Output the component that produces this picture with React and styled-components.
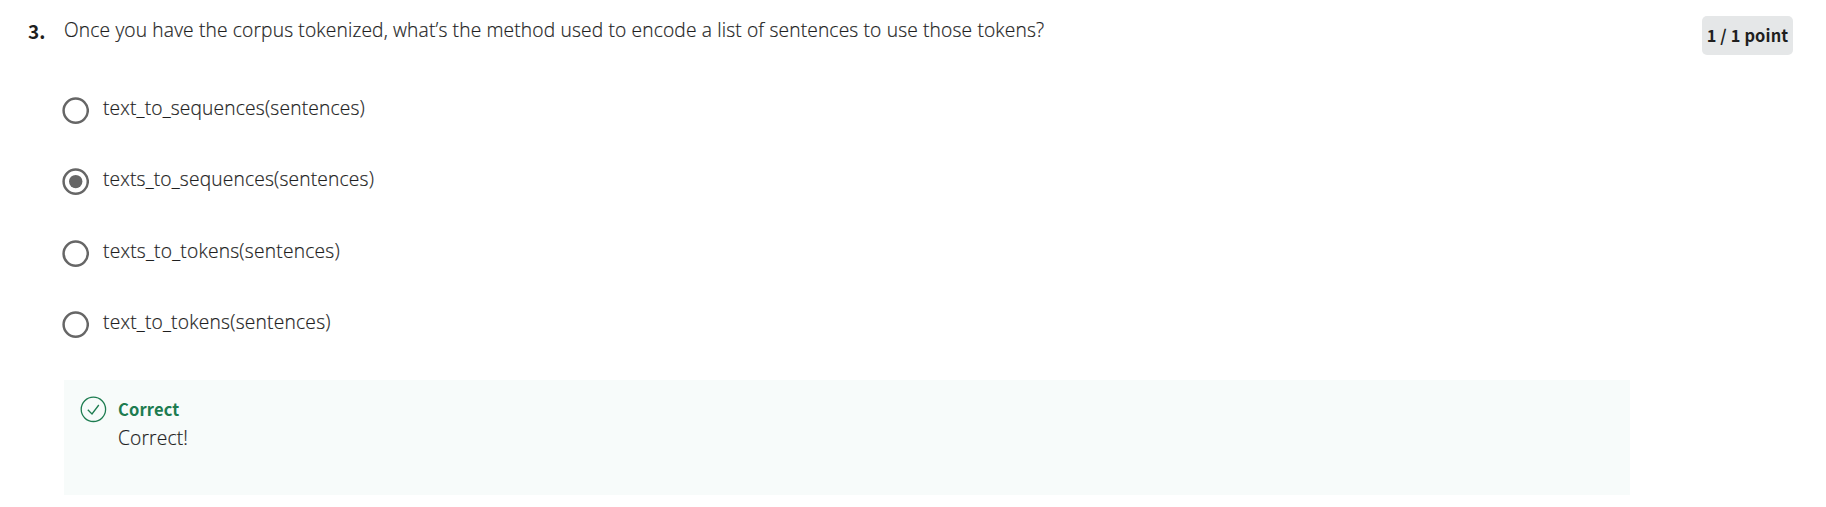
import React from 'react';
import styled, { createGlobalStyle } from 'styled-components';

const Global = createGlobalStyle`
  body { margin: 0; background: #fff; color: #1f1f1f; font: 300 19.2px/28px "Open Sans", sans-serif; letter-spacing: 0.15px; }
`;
const Question = styled.section`
  display: flex; align-items: flex-start; box-sizing: border-box;
  width: 1826px; height: 507px; padding: 16px 33px 0 28px; overflow: hidden;
`;
const Index = styled.div`
  width: 36px; padding-top: 1px; flex: none;
  font: 700 19px/28px "Noto Sans CJK SC", sans-serif; color: #1f1f1f;
`;
const Body = styled.div`flex: 1; min-width: 0;`;
const Copy = styled.div`
  line-height: 28px; white-space: nowrap; -webkit-text-stroke: 0.2px currentColor;
  letter-spacing: ${p => p.$spacing || '0.15px'};
`;
const Options = styled.div`
  display: flex; flex-direction: column; gap: 43.4px; margin-top: 50px; margin-left: -2px;
`;
const Option = styled.label`display: flex; height: 28px; gap: 14px; white-space: nowrap;`;
const Radio = styled.svg`width: 27px; height: 27px; margin-top: 3px; flex: none;`;
const Feedback = styled.div`
  display: flex; gap: 12px; box-sizing: border-box; width: 1566px; height: 115px;
  margin-top: 43.8px; padding: 16px; background: #f7fbfa;
`;
const Check = styled.svg`width: 26px; height: 26px; flex: none; overflow: visible;`;
const Verdict = styled.div`
  padding-bottom: 1px;
  font: 700 16.5px/27px "Noto Sans CJK SC", sans-serif; color: #1d7c50;
`;
const Points = styled.div`
  flex: none; box-sizing: border-box; width: 91px; height: 39px; border-radius: 5px;
  background: #e5e7e8; color: #1f1f1f; text-align: center; white-space: nowrap;
  font: 700 16.4px/38px "Noto Sans CJK SC", sans-serif;
`;

const answers = ['text_to_sequences(sentences)', 'texts_to_sequences(sentences)', 'texts_to_tokens(sentences)', 'text_to_tokens(sentences)'];

export default function App() {
  return (
    <>
      <Global />
      <Question>
        <Index>3.</Index>
        <Body>
          <Copy>Once you have the corpus tokenized, what’s the method used to encode a list of sentences to use those tokens?</Copy>
          <Options>
            {answers.map((a, i) => (
              <Option key={a}>
                <Radio viewBox="0 0 27 27" role="radio" aria-checked={i === 1}>
                  <circle cx="13.7" cy="13.6" r="12.1" fill="none" stroke="#666" strokeWidth="2.5" />
                  {i === 1 && <circle cx="13.7" cy="13.6" r="6.7" fill="#666" />}
                </Radio>
                <Copy $spacing={i < 2 ? '0.17px' : '0.22px'}>{a}</Copy>
              </Option>
            ))}
          </Options>
          <Feedback>
            <Check viewBox="0 0 26 26" fill="none" stroke="#1d7c50" strokeWidth="1.3">
              <circle cx="13.4" cy="13.3" r="12.2" />
              <path d="M7.8 13.8l4.2 4.2 6.8-9" />
            </Check>
            <div><Verdict>Correct</Verdict><Copy>Correct!</Copy></div>
          </Feedback>
        </Body>
        <Points>1 / 1 point</Points>
      </Question>
    </>
  );
}
